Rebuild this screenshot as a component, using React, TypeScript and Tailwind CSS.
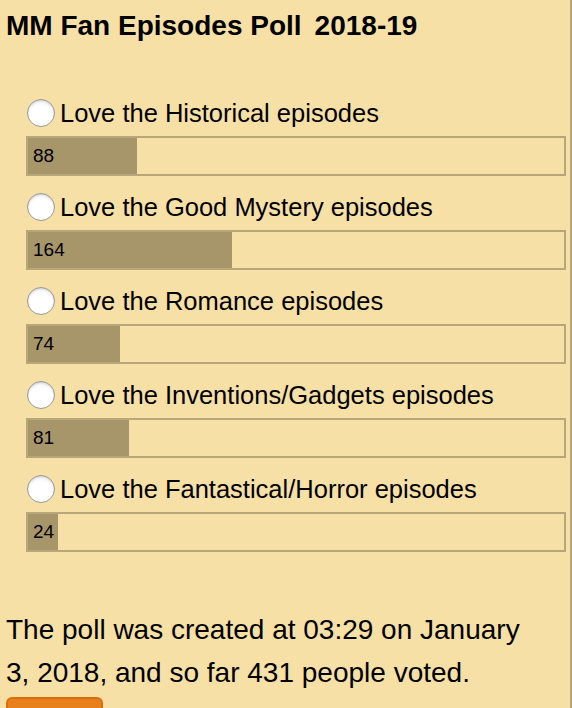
import React from "react";

type Option = { label: string; votes: number };

const options: Option[] = [
  { label: "Love the Historical episodes", votes: 88 },
  { label: "Love the Good Mystery episodes", votes: 164 },
  { label: "Love the Romance episodes", votes: 74 },
  { label: "Love the Inventions/Gadgets episodes", votes: 81 },
  { label: "Love the Fantastical/Horror episodes", votes: 24 },
];

const total = 431;

function Radio() {
  return (
    <span className="block w-[28px] h-[28px] shrink-0 rounded-full border border-[#9a9a9a] bg-[radial-gradient(circle_at_50%_70%,#ffffff_55%,#e6e6e6_100%)] shadow-[inset_0_1px_2px_rgba(0,0,0,0.15)]" />
  );
}

export default function App() {
  return (
    <div
      className="w-[572px] h-[708px] overflow-hidden bg-[#f6e0a6] border-r-2 border-[#b5a57a] text-black"
      style={{ fontFamily: '"Liberation Sans", Arial, sans-serif' }}
    >
      <h2 className="pt-[11px] pl-[6px] text-[28px] leading-[30px] font-bold">
        MM Fan Episodes Poll<span className="ml-[13px] text-[28px]">2018-19</span>
      </h2>

      <div className="pl-[26px] pr-[4px] pt-[57px] flex flex-col gap-[16px]">
        {options.map((o) => (
          <div key={o.label} className="flex flex-col gap-[8px]">
            <label className="flex items-center gap-[5px] h-[30px] pl-[1px] text-[25.5px] leading-[30px]">
              <Radio />
              <span>{o.label}</span>
            </label>
            <div className="relative h-[40px] border-2 border-[#b8a77b]">
              <div
                className="h-full bg-[#a8966b]"
                style={{ width: `${(o.votes / total) * 100}%` }}
              />
              <span className="absolute left-[5px] top-0 h-full flex items-center text-[19px]">
                {o.votes}
              </span>
            </div>
          </div>
        ))}
      </div>

      <p className="mt-[56px] pl-[6px] pr-[20px] text-[28px] leading-[43px]">
        The poll was created at 03:29 on January 3, 2018, and so far 431 people voted.
      </p>
      <button className="ml-[6px] mt-[3px] w-[97px] h-[40px] rounded-[6px] bg-[#e8801c] border-2 border-[#d86e10]" />
    </div>
  );
}
